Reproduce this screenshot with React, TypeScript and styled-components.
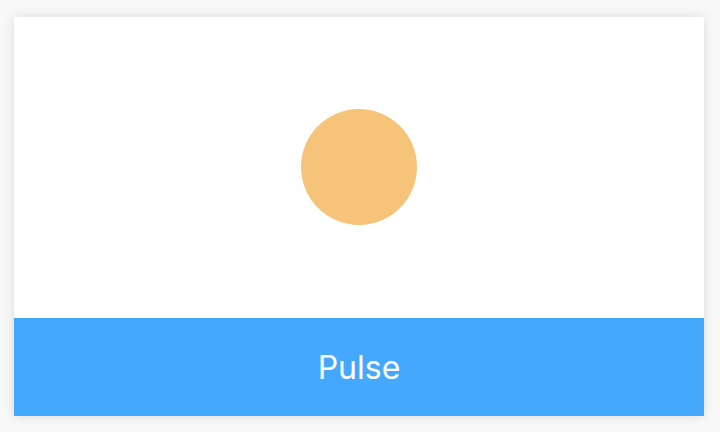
import React from "react";
import styled, { createGlobalStyle } from "styled-components";

const Global = createGlobalStyle`
  html, body { margin: 0; padding: 0; background: #f8f8f8; }
  body { font-family: Inter, "Open Sans", sans-serif; }
`;

const Page = styled.div`
  width: 720px;
  height: 432px;
  box-sizing: border-box;
  padding: 17px 16px 16px 14px;
  display: flex;
`;

const Card = styled.div`
  flex: 1;
  display: flex;
  flex-direction: column;
  background: #ffffff;
  box-shadow: 0 0 10px rgba(0, 0, 0, 0.12);
`;

const Stage = styled.div`
  flex: 1;
  display: flex;
  align-items: center;
  justify-content: center;
`;

const Dot = styled.div`
  width: 116px;
  height: 116px;
  border-radius: 50%;
  background: #f5c479;
  margin-top: -1px;
`;

const Button = styled.button`
  height: 98px;
  border: none;
  background: #44a8fd;
  color: #ffffff;
  font-family: Inter, "Open Sans", sans-serif;
  font-size: 32px;
  font-weight: 400;
  display: flex;
  align-items: center;
  justify-content: center;
  padding: 0;
`;

export default function App() {
  return (
    <>
      <Global />
      <Page>
        <Card>
          <Stage>
            <Dot />
          </Stage>
          <Button>Pulse</Button>
        </Card>
      </Page>
    </>
  );
}
